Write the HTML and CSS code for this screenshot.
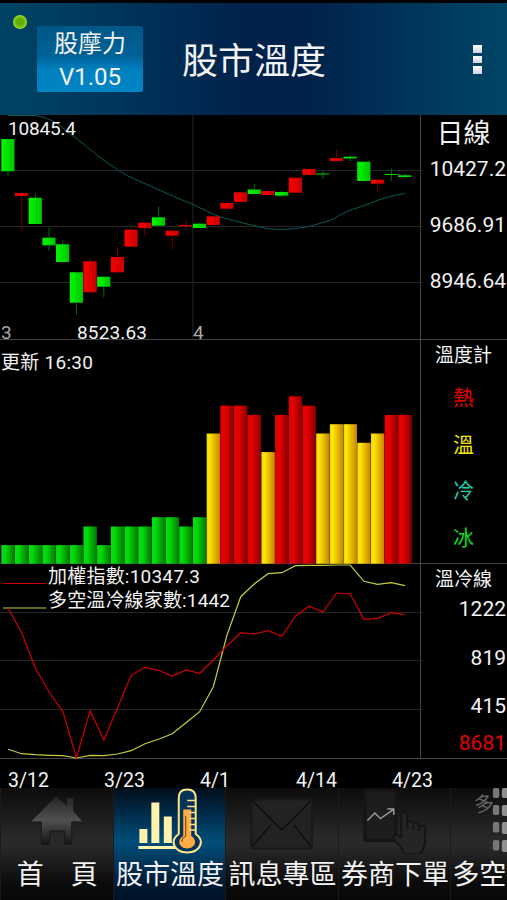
FILE: index.html
```html
<!DOCTYPE html>
<html lang="zh-Hant">
<head>
    <meta charset="UTF-8">
    <meta name="viewport" content="width=device-width, initial-scale=1.0">
    <title>股市溫度</title>
    <link rel="stylesheet" href="styles.css">
</head>
<body>
    <div class="app">
        <header class="header">
            <span class="status-dot"></span>
            <div class="version">
                <span>股摩力</span>
                <span>V1.05</span>
            </div>
            <h1>股市溫度</h1>
            <div class="menu"><i></i><i></i><i></i></div>
        </header>

        <main>
            <section class="panel panel-daily">
                <svg class="chart" id="candles" viewBox="0 115 420 224">
                    <path class="grid" d="M0 170.5H423M0 226.5H423M0 282.5H423M193 115V340"/>
                    <path class="ma" d="M8 115.500H36C43 117 50 119 57 123.500L80 141.500C89 148 97 156 107 162.500S124 175 133.500 178.500L167 193.500L193 204.500C203 209 210 213 220 217L247 224L267 228.500Q278 230 287 229.300T303 227.500T323 222.500T337 217T352 209.500L363 206L380 199.500Q393 195 405 193.500"/>
                    <text class="label" x="8" y="135" textLength="68">10845.4</text>
                    <text class="label" x="77" y="339" textLength="70">8523.63</text>
                    <text class="label month" x="1" y="339">3</text>
                    <text class="label month" x="193" y="339">4</text>
                </svg>
                <div class="side">
                    <h2 class="big">日線</h2>
                    <span>10427.2</span>
                    <span>9686.91</span>
                    <span>8946.64</span>
                </div>
            </section>

            <section class="panel panel-temp">
                <svg class="chart" id="bars" viewBox="0 340 420 223">
                    <defs>
                        <linearGradient id="green"><stop offset="0" stop-color="#00e010"/><stop offset=".3" stop-color="#04d80c"/><stop offset="1" stop-color="#007800"/></linearGradient>
                        <linearGradient id="yellow"><stop offset="0" stop-color="#e8d800"/><stop offset=".2" stop-color="#ffe808"/><stop offset="1" stop-color="#c88400"/></linearGradient>
                        <linearGradient id="red"><stop offset="0" stop-color="#e00000"/><stop offset=".3" stop-color="#e80000"/><stop offset="1" stop-color="#880000"/></linearGradient>
                        <linearGradient id="up"><stop offset="0" stop-color="#fa0000"/><stop offset="1" stop-color="#c80000"/></linearGradient>
                        <linearGradient id="down"><stop offset="0" stop-color="#00f800"/><stop offset="1" stop-color="#00c400"/></linearGradient>
                    </defs>
                    <text class="label" x="1" y="369" textLength="92">更新 16:30</text>
                </svg>
                <div class="side">
                    <h2>溫度計</h2>
                    <b class="hot">熱</b>
                    <b class="warm">溫</b>
                    <b class="cool">冷</b>
                    <b class="ice">冰</b>
                </div>
            </section>

            <section class="panel panel-line">
                <svg class="chart" id="lines" viewBox="0 564 420 194">
                    <path class="grid" d="M0 612.500H423M0 660.500H423M0 709.500H423"/>
                    <path class="index" d="M3 583.500H46"/>
                    <path class="count" d="M3 608H46"/>
                    <text class="label" x="48" y="583" textLength="152">加權指數:10347.3</text>
                    <text class="label" x="48" y="607" textLength="182">多空溫冷線家數:1442</text>
                </svg>
                <div class="side">
                    <h2>溫冷線</h2>
                    <span>1222</span>
                    <span>819</span>
                    <span>415</span>
                    <span class="low">8681</span>
                </div>
            </section>

            <div class="dates">
                <span>3/12</span><span>3/23</span><span>4/1</span><span>4/14</span><span>4/23</span>
            </div>
        </main>

        <nav class="tabs">
            <a class="tab">
                <svg viewBox="1 788 112 66">
                    <defs><linearGradient id="house" x2="0" y2="1"><stop offset="0" stop-color="#242424"/><stop offset=".5" stop-color="#505050"/><stop offset="1" stop-color="#151515"/></linearGradient></defs>
                    <path fill="url(#house)" stroke="#191919" d="M56.500 796L67 805V798H74V811L83.500 822H72V844.500H65V831H50V844.500H41.500V822H30Z"/>
                </svg>
                <span>首　頁</span>
            </a>
            <a class="tab active">
                <svg viewBox="113.500 788 112 66">
                    <path fill="#fff3ae" d="M139 829h8v14h-8zM151 802.500h8V843h-8zM163.500 816.500h8V843h-8zM138 846h37v3h-37z"/>
                    <path fill="#063458" stroke="#ffe38a" stroke-width="2" d="M178.500 834V798q0-8.500 8.500-8.500t8.500 8.500V834c10 7 4.500 18.500-8.500 18.500s-18.500-11.500-8.500-18.500Z"/>
                    <path fill="#ffac42" d="M183 809.500h8V836c7 4 4 12.500-4 12.500s-11-8.500-4-12.500z"/>
                    <path fill="none" stroke="#ffe38a" stroke-width="1.500" d="M187 800.500h8M187 806.500h8M189 812.500h6M189 818.500h6M189 824.500h6M189 830h6"/>
                    <path fill="none" stroke="#633c1e" d="M185.500 816V836q-4 2-4 6"/>
                </svg>
                <span>股市溫度</span>
            </a>
            <a class="tab">
                <svg viewBox="226 788 112 66">
                    <rect x="251.500" y="799.500" width="61" height="49" rx="3" fill="#222" stroke="#181818" stroke-width="2"/>
                    <path fill="none" stroke="#0e0e0e" stroke-width="1.500" d="M253 801L282 830L311 801M253 846L271 825M311 846L294 825"/>
                </svg>
                <span>訊息專區</span>
            </a>
            <a class="tab">
                <svg viewBox="338.500 788 112 66">
                    <rect x="364.500" y="790.500" width="31" height="50" rx="1" fill="#1d1d1d" stroke="#151515" stroke-width="3"/>
                    <path fill="none" stroke="#999" stroke-width="1.500" d="M367 820.500L374.500 813L380 818.500L393 809.500M387 809H393.500V815"/>
                    <path fill="#252525" stroke="#151515" stroke-width="2" stroke-linejoin="round" d="M401 833V815q3-7 6 0v8q3-4 6 1q3-3 6 2q5-2 6 3v14l-4 11H404l-4-8q-5-3-7-10q4-3 8 2zM407 823v5M413 824v6M419 826v5"/>
                </svg>
                <span>券商下單</span>
            </a>
            <a class="tab">
                <svg viewBox="451 788 112 66">
                    <text class="tilt" x="474" y="811" transform="rotate(-8 484 802)">多</text>
                    <g fill="#777"><rect x="493" y="788" width="6.500" height="10" rx="2"/><rect x="493" y="805" width="6.500" height="10" rx="2"/><rect x="493" y="822" width="6.500" height="10.500" rx="2"/><rect x="493" y="840" width="6.500" height="10.500" rx="2"/></g>
                    <g fill="#909090"><rect x="502" y="788" width="10" height="10" rx="2"/><rect x="502" y="805" width="10" height="11" rx="2"/><rect x="502" y="822" width="10" height="12" rx="2"/><rect x="502" y="840" width="10" height="12" rx="2"/></g>
                </svg>
                <span>多空</span>
            </a>
        </nav>
    </div>

    <script>
        const STEP = 13.69;
        const FIRST = 8;

        // [high, open/close top, open/close bottom, low, direction]
        const candles = [
            [139, 139, 171.3, 176.7, 'down'], [191, 193, 196, 230, 'up'], [193.3, 197.7, 224, 224, 'down'],
            [227.3, 237.7, 245.3, 251, 'down'], [240.7, 244.3, 262, 262, 'down'], [272.3, 272.3, 302.7, 315, 'down'],
            [258.7, 261.3, 292.3, 292.3, 'up'], [276.7, 276.7, 286.7, 297.3, 'down'], [247.7, 257, 272.3, 272.3, 'up'],
            [226, 229.7, 246.7, 246.7, 'up'], [222, 222.7, 228, 236, 'up'], [206.3, 217.3, 225.7, 225.7, 'down'],
            [230.7, 230.7, 235.7, 249.3, 'up'], [218.7, 225, 226.3, 230, 'up'], [223, 223.7, 228, 228, 'down'],
            [216, 216.3, 225, 227, 'up'], [201, 203, 208.7, 208.7, 'up'], [192, 192.3, 202, 202, 'up'],
            [184, 189.5, 194, 194, 'down'], [190.5, 191, 195, 196, 'up'], [191, 192, 195.7, 197, 'down'],
            [177.7, 177.7, 192.7, 192.7, 'up'], [168, 169, 175, 175, 'up'], [170.7, 173.5, 174.5, 179, 'down'],
            [149.7, 158, 161, 161, 'up'], [155.5, 156.7, 158.5, 161, 'down'], [161.7, 161.7, 181, 181, 'down'],
            [179, 179.7, 183.7, 191.7, 'up'], [168.3, 174, 175, 181, 'down'], [174, 175.3, 177, 177.5, 'down']
        ];

        const temps = [2, 2, 2, 2, 2, 2, 4, 2, 4, 4, 4, 5, 5, 4, 5, 14, 17, 17, 16, 12, 16, 18, 17, 14, 15, 15, 13, 14, 16, 16];

        const indexLine = [608, 632.7, 668.3, 692, 711.3, 757.7, 710.7, 740, 708, 675.3, 667.3, 670.3, 676.3, 670, 673.3,
            660, 645.7, 632.7, 634, 630.7, 636.3, 616, 606.3, 612, 593, 594, 619.3, 618.3, 612.7, 614.7];
        const countLine = [749.3, 753.7, 754.7, 755.3, 755.7, 758, 755.3, 755.7, 754, 750.7, 743.7, 739.3, 733.7, 722.7, 711.7,
            686.7, 635, 596.7, 583.7, 573.7, 572.7, 565.7, 565.3, 565.3, 565, 565, 581.3, 584.3, 582.7, 585.7];

        function draw(parent, tag, attrs) {
            const el = document.createElementNS('http://www.w3.org/2000/svg', tag);
            for (const key in attrs) el.setAttribute(key, attrs[key]);
            document.getElementById(parent).appendChild(el);
        }

        candles.forEach(([high, top, bottom, low, dir], i) => {
            const x = FIRST + STEP * i;
            draw('candles', 'path', { class: 'wick ' + dir, d: `M${x} ${high}V${low}` });
            draw('candles', 'rect', { x: x - 6.7, y: top, width: 13.2, height: bottom - top, fill: `url(#${dir})` });
        });

        temps.forEach((value, i) => {
            const color = value > 15 ? 'red' : value > 10 ? 'yellow' : 'green';
            const height = value * 9.3;
            draw('bars', 'rect', { x: FIRST + STEP * i - 6.7, y: 563.7 - height, width: 13.4, height, fill: `url(#${color})` });
        });

        function drawLine(values, name) {
            draw('lines', 'polyline', { class: name, points: values.map((y, i) => `${FIRST + STEP * i},${y}`).join(' ') });
        }
        drawLine(countLine, 'count');
        drawLine(indexLine, 'index');
    </script>
</body>
</html>
```

FILE: styles.css
```css
* {
    margin: 0;
    padding: 0;
    box-sizing: border-box;
}

body {
    background: #000;
    color: #f2f2f2;
    font-family: Roboto, "Noto Sans CJK TC", sans-serif;
}

.app {
    width: 507px;
    height: 900px;
    padding-top: 3px;
    overflow: hidden;
}

.header {
    display: flex;
    height: 112px;
    padding: 0 25px 0 13px;
    background: linear-gradient(90deg, #004365 0%, #003d61 12%, #00214a 50%, #00214a 60%, #003b5e 88%, #004566 100%);
}

.status-dot {
    width: 14px;
    height: 14px;
    margin-top: 12px;
    border-radius: 50%;
    background: radial-gradient(#63ad00 35%, #a2e62e 75%);
}

.version {
    display: flex;
    flex-direction: column;
    align-items: center;
    width: 106px;
    height: 66px;
    margin: 23px 0 0 10px;
    border-radius: 2px;
    background: linear-gradient(#005786 0%, #006197 45%, #007fbe 65%, #0085c5 100%);
    font-size: 24px;
    line-height: 30px;
}

.version span:first-child {
    line-height: 36px;
}

.header h1 {
    margin: 33px 0 0 39px;
    font-size: 36px;
    font-weight: 400;
    line-height: 52px;
}

.menu {
    display: flex;
    flex-direction: column;
    gap: 3px;
    margin: 42px 0 0 auto;
}

.menu i {
    width: 9px;
    height: 7.500px;
    background: linear-gradient(#fff, #ccd4dd);
}

.panel {
    display: grid;
    grid-template-columns: 421px 86px;
    grid-template-rows: minmax(0, 1fr);
    border-bottom: 1px solid #454545;
}

.panel-daily {
    height: 225px;
}

.panel-temp {
    height: 224px;
}

.panel-line {
    height: 195px;
}

.chart {
    display: block;
    width: 421px;
    height: 100%;
    border-right: 1px solid #454545;
    overflow: visible;
}

.grid {
    stroke: #262626;
    fill: none;
}

.label {
    fill: #f2f2f2;
    font-size: 19px;
}

.month {
    fill: #aaa;
}

.ma {
    fill: none;
    stroke: #0b5956;
}

.wick.up {
    stroke: #700000;
}

.wick.down {
    stroke: #006b00;
}

.index {
    fill: none;
    stroke: #d00000;
    stroke-width: 1.2;
}

.count {
    fill: none;
    stroke: #c5cc3b;
    stroke-width: 1.2;
}

.side {
    display: flex;
    flex-direction: column;
    align-items: flex-end;
    padding-right: 1px;
    font-size: 21px;
}

.side > * {
    flex-shrink: 0;
}

.side h2 {
    align-self: center;
    height: 28px;
    font-size: 19px;
    font-weight: 400;
    line-height: 31px;
}

.side .big {
    height: 34px;
    font-size: 27px;
    line-height: 38px;
}

.panel-daily .side span {
    height: 56px;
    line-height: 40px;
}

.side b {
    align-self: center;
    height: 46.500px;
    font-weight: 400;
    line-height: 60px;
}

.side .hot {
    color: #e80000;
}

.warm {
    color: #f0e600;
}

.cool {
    color: #17d5b0;
}

.ice {
    color: #10d820;
}

.panel-line .side span {
    height: 48.500px;
    line-height: 34px;
}

.panel-line .side .low {
    height: 34px;
    margin-top: -12px;
    color: #e80000;
}

.dates {
    display: grid;
    grid-template-columns: repeat(5, 96px);
    height: 29px;
    padding-left: 8px;
    font-size: 19.500px;
    line-height: 43px;
}

.tabs {
    display: flex;
    height: 112px;
}

.tab {
    display: flex;
    flex: 0 0 112.600px;
    flex-direction: column;
    align-items: center;
    min-width: 0;
    border-left: 1px solid #1b1b1b;
    background: linear-gradient(#0c0c0c 0%, #292929 45%, #292929 52%, #0b0b0b 85%, #080808 100%);
    font-size: 27px;
    line-height: 42px;
    white-space: nowrap;
}

.tab:last-child {
    align-items: flex-start;
}

.tab.active {
    background: linear-gradient(#020d1c 0%, #004e7a 48%, #00466f 55%, #001a35 85%, #001227 100%);
}

.tab svg {
    display: block;
    flex-shrink: 0;
    width: 111.600px;
    height: 66px;
}

.tab span {
    padding-left: 1px;
}

.tilt {
    fill: #666;
    font-size: 20px;
}
```
